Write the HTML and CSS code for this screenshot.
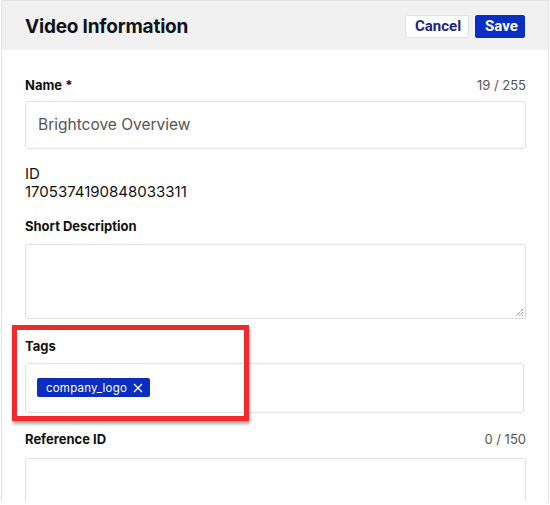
FILE: index.html
```html
<!DOCTYPE html>
<html>
<head>
<meta charset="utf-8">
<link rel="stylesheet" href="styles.css">
</head>
<body>
<div class="panel">
  <header class="head">
    <h1 class="title">Video Information</h1>
    <div class="actions">
      <button class="btn btn-cancel">Cancel</button>
      <button class="btn btn-save">Save</button>
    </div>
  </header>
  <main class="body">
    <div class="field">
      <div class="label-row"><span class="label">Name *</span><span class="count">19 / 255</span></div>
      <div class="input input-name">Brightcove Overview</div>
    </div>
    <div class="id-block">
      <div class="id-label">ID</div>
      <div class="id-value">1705374190848033311</div>
    </div>
    <div class="field field-desc">
      <div class="label-row"><span class="label">Short Description</span></div>
      <div class="input textarea">
        <svg class="grip" width="9" height="9" viewBox="0 0 9 9"><path d="M8 1L1 8M8 4L4 8M8 7L7 8" stroke="#555" stroke-width="1" fill="none" stroke-dasharray="1 1"/></svg>
      </div>
    </div>
    <div class="field field-tags">
      <div class="highlight"></div>
      <div class="label-row"><span class="label">Tags</span></div>
      <div class="input input-tags">
        <span class="chip">company_logo
          <svg class="chip-x" width="10" height="10" viewBox="0 0 10 10"><path d="M1 1L9 9M9 1L1 9" stroke="#fff" stroke-width="1.3"/></svg>
        </span>
      </div>
    </div>
    <div class="field field-ref">
      <div class="label-row"><span class="label">Reference ID</span><span class="count">0 / 150</span></div>
      <div class="input input-ref"></div>
    </div>
  </main>
</div>
</body>
</html>
```

FILE: styles.css
```css
* { box-sizing: border-box; }
html, body { margin: 0; padding: 0; background: #fff; overflow: hidden; }
body { width: 550px; height: 505px; font-family: Inter, "Liberation Sans", sans-serif; color: #111; }
.panel {
  margin: 0 1px;
  border-left: 1px solid #e3e3e3;
  border-right: 1px solid #e3e3e3;
  height: 502px;
  overflow: hidden;
}
.head {
  height: 50px;
  background: #f1f1f1;
  border-top: 1px solid #e2e2e2;
  display: flex;
  align-items: center;
  justify-content: space-between;
  padding: 0 23px 0 23px;
}
.title {
  margin: 2px 0 0;
  font-size: 19px;
  font-weight: 700;
  letter-spacing: -0.2px;
  color: #11131a;
}
.actions { display: flex; gap: 6px; margin-top: 2px; }
.btn {
  height: 23px;
  font-family: Roboto, "Liberation Sans", sans-serif;
  font-weight: 700;
  font-size: 15px;
  border-radius: 2px;
  padding: 0 9px;
  line-height: 21px;
}
.btn-cancel { background: #fff; border: 1px solid #e2e2e2; color: #1c2388; width: 64px; }
.btn-save { background: #0b2ec2; border: 1px solid #0b2ec2; color: #fff; width: 50px; }
.body { padding: 0 22px 0 23px; }
.field { position: relative; }
.label-row {
  display: flex;
  justify-content: space-between;
  align-items: baseline;
  padding-top: 27px;
  height: 51px;
  font-size: 13px;
}
.label { font-weight: 700; color: #111; }
.count { color: #555; }
.input {
  border: 1px solid #e2e2e2;
  border-radius: 3px;
  background: #fff;
}
.input-name {
  height: 48px;
  padding: 0 12px;
  font-size: 15.5px;
  color: #555;
  line-height: 46px;
}
.id-block { padding-top: 16px; font-size: 15px; line-height: 18px; }
.id-label { color: #111; }
.id-value { color: #111; }
.field-desc .label-row { padding-top: 17px; height: 43px; }
.textarea { height: 75px; position: relative; }
.grip { position: absolute; right: 1px; bottom: 1px; }
.field-tags .label-row { padding-top: 19px; height: 44px; }
.input-tags { height: 50px; margin-right: 2px; padding: 14px 11px; display: flex; align-items: flex-start; }
.chip {
  display: inline-flex;
  align-items: center;
  gap: 6px;
  height: 19px;
  padding: 0 7px 0 9px;
  background: #0b2ec2;
  color: #fff;
  font-size: 11.5px;
  letter-spacing: 0.2px;
  border-radius: 2px;
}
.highlight {
  position: absolute;
  left: -13px;
  top: 6px;
  width: 237px;
  height: 96px;
  border: 5px solid #f2282c;
  box-shadow: 1px 3px 3px rgba(0,0,0,0.35);
  pointer-events: none;
}
.field-ref .label-row { padding-top: 18px; height: 45px; }
.input-ref { height: 60px; }
```
